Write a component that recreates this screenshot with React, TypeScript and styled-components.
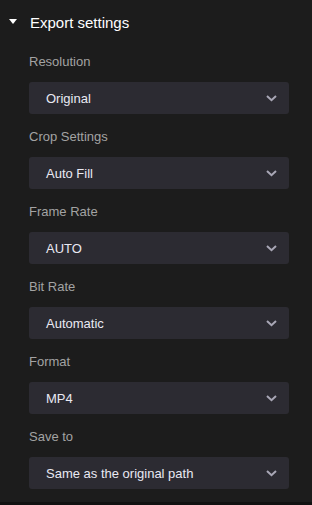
import React from "react";
import styled, { createGlobalStyle } from "styled-components";

const GlobalStyle = createGlobalStyle`
  html, body {
    margin: 0;
    padding: 0;
    background: #111111;
  }
  body {
    font-family: "Liberation Sans", Arial, sans-serif;
  }
`;

const fields = [
  { label: "Resolution", value: "Original" },
  { label: "Crop Settings", value: "Auto Fill" },
  { label: "Frame Rate", value: "AUTO" },
  { label: "Bit Rate", value: "Automatic" },
  { label: "Format", value: "MP4" },
  { label: "Save to", value: "Same as the original path" },
];

const Caret = () => (
  <svg width="8" height="6" viewBox="0 0 8 6">
    <path d="M0 0 H8 L4 5 Z" fill="#ffffff" />
  </svg>
);

const Chevron = () => (
  <svg width="11" height="7" viewBox="0 0 11 7">
    <path
      d="M1 1 L5.5 5.2 L10 1"
      fill="none"
      stroke="#a9a7b6"
      strokeWidth="2"
    />
  </svg>
);

const App = () => {
  return (
    <>
      <GlobalStyle />
      <Panel>
        <Header>
          <Caret />
          <Title>Export settings</Title>
        </Header>
        <Fields>
          {fields.map((f) => (
            <Field key={f.label}>
              <Label>{f.label}</Label>
              <Select>
                <span>{f.value}</span>
                <Chevron />
              </Select>
            </Field>
          ))}
        </Fields>
      </Panel>
    </>
  );
};

export default App;

const Panel = styled.div`
  width: 312px;
  height: 502px;
  background: #1c1c1c;
  box-sizing: border-box;
`;

const Header = styled.div`
  display: flex;
  align-items: center;
  height: 44px;
  padding-left: 9px;
  gap: 13px;
`;

const Title = styled.span`
  color: #ffffff;
  font-size: 15px;
`;

const Fields = styled.div`
  display: flex;
  flex-direction: column;
  gap: 14px;
  padding: 9px 23px 0 29px;
`;

const Field = styled.div`
  display: flex;
  flex-direction: column;
  gap: 11px;
`;

const Label = styled.div`
  color: #a3a3a3;
  font-size: 13px;
  line-height: 18px;
`;

const Select = styled.div`
  display: flex;
  align-items: center;
  justify-content: space-between;
  height: 32px;
  padding: 0 12px 0 17px;
  background: #2c2b32;
  border-radius: 3px;
  color: #e9e9f2;
  font-size: 13px;
`;
